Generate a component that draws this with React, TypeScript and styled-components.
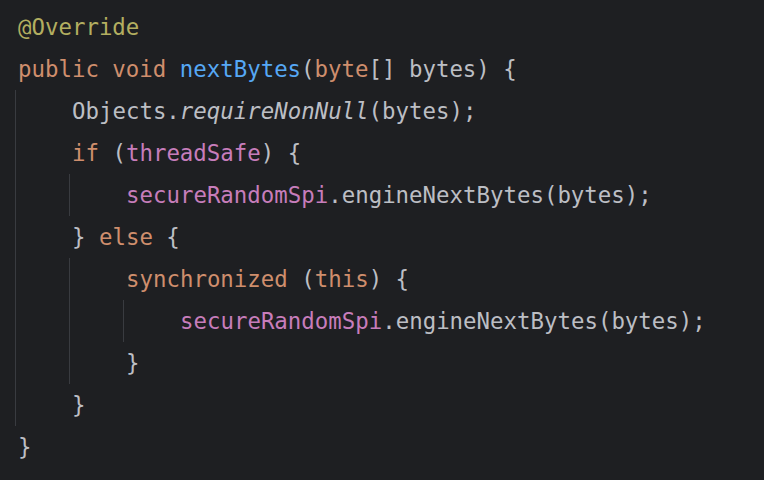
import React from "react";
import styled, { createGlobalStyle } from "styled-components";

const Global = createGlobalStyle`
  html, body { margin: 0; padding: 0; background: #1e1f22; }
  body { width: 764px; height: 480px; overflow: hidden; }
`;

const Editor = styled.div`
  width: 764px;
  height: 480px;
  box-sizing: border-box;
  background: #1e1f22;
  padding: 6px 0 0 15px;
  font-family: "DejaVu Sans Mono", "Liberation Mono", monospace;
  font-size: 22.4px;
  color: #bcbec4;
`;

const Line = styled.div`
  display: flex;
  height: 42px;
  align-items: center;
  white-space: pre;
`;

const Indent = styled.span`
  flex: 0 0 54px;
  height: 42px;
  box-sizing: border-box;
  border-left: 1px solid #393b40;
`;

const Code = styled.span`
  padding-left: 3px;
  line-height: 42px;
`;

type Kind = "kw" | "ann" | "fn" | "field" | "plain" | "static";

const colors: Record<Kind, string> = {
  kw: "#cf8e6d",
  ann: "#b3ae60",
  fn: "#56a8f5",
  field: "#c77dbb",
  plain: "#bcbec4",
  static: "#bcbec4",
};

const Tok = styled.span<{ $k: Kind }>`
  color: ${(p) => colors[p.$k]};
  font-style: ${(p) => (p.$k === "static" ? "italic" : "normal")};
`;

type T = [Kind, string];
const lines: { level: number; toks: T[] }[] = [
  { level: 0, toks: [["ann", "@Override"]] },
  {
    level: 0,
    toks: [
      ["kw", "public void "],
      ["fn", "nextBytes"],
      ["plain", "("],
      ["kw", "byte"],
      ["plain", "[] bytes) {"],
    ],
  },
  {
    level: 1,
    toks: [
      ["plain", "Objects."],
      ["static", "requireNonNull"],
      ["plain", "(bytes);"],
    ],
  },
  {
    level: 1,
    toks: [
      ["kw", "if"],
      ["plain", " ("],
      ["field", "threadSafe"],
      ["plain", ") {"],
    ],
  },
  {
    level: 2,
    toks: [
      ["field", "secureRandomSpi"],
      ["plain", ".engineNextBytes(bytes);"],
    ],
  },
  {
    level: 1,
    toks: [
      ["plain", "} "],
      ["kw", "else"],
      ["plain", " {"],
    ],
  },
  {
    level: 2,
    toks: [
      ["kw", "synchronized"],
      ["plain", " ("],
      ["kw", "this"],
      ["plain", ") {"],
    ],
  },
  {
    level: 3,
    toks: [
      ["field", "secureRandomSpi"],
      ["plain", ".engineNextBytes(bytes);"],
    ],
  },
  { level: 2, toks: [["plain", "}"]] },
  { level: 1, toks: [["plain", "}"]] },
  { level: 0, toks: [["plain", "}"]] },
];

export default function App() {
  return (
    <>
      <Global />
      <Editor>
        {lines.map((l, i) => (
          <Line key={i}>
            {Array.from({ length: l.level }).map((_, j) => (
              <Indent key={j} />
            ))}
            <Code>
              {l.toks.map(([k, s], j) => (
                <Tok key={j} $k={k}>
                  {s}
                </Tok>
              ))}
            </Code>
          </Line>
        ))}
      </Editor>
    </>
  );
}
